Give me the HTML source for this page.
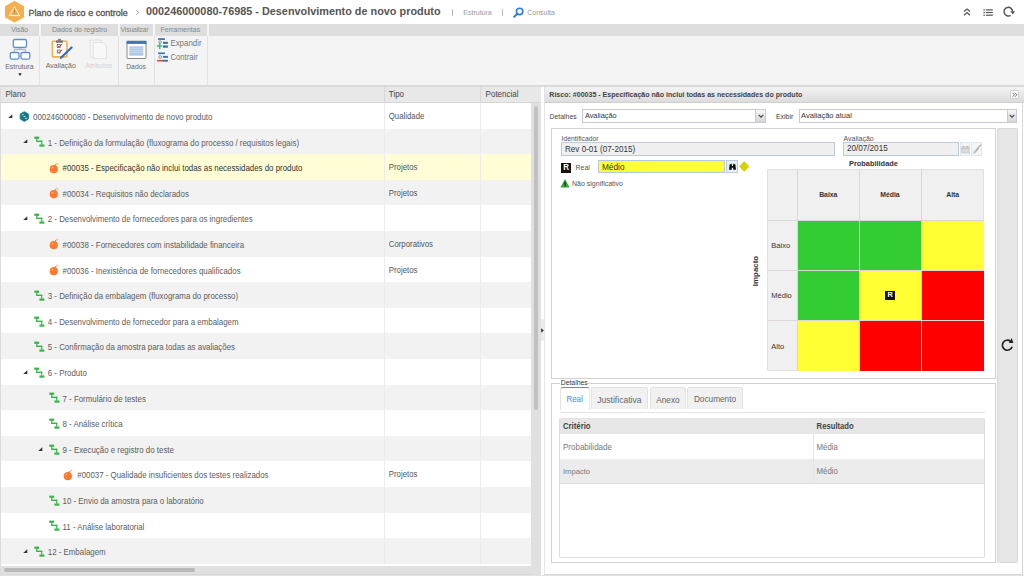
<!DOCTYPE html>
<html><head><meta charset="utf-8">
<style>
*{margin:0;padding:0;box-sizing:border-box}
html,body{width:1024px;height:576px;overflow:hidden;background:#fff;font-family:"Liberation Sans",sans-serif;color:#555}
.a{position:absolute}
.t{position:absolute;white-space:nowrap;line-height:10px;transform:scaleY(1.06)}
svg{position:absolute;overflow:visible}
</style></head><body>
<!-- TITLE BAR -->
<div class="a" style="left:0;top:0;width:1024px;height:23.7px;background:#fff"></div>
<svg style="left:0;top:0" width="30" height="24" viewBox="0 0 30 24">
  <polygon points="14.5,1.6 23.4,6.6 23.4,16.9 14.5,21.9 5.6,16.9 5.6,6.6" fill="#f2b04f" stroke="#f2b04f" stroke-width="1.2" stroke-linejoin="round"/>
  <path d="M14.5 6.8 L19.6 15.6 L9.4 15.6 Z" fill="none" stroke="#fff" stroke-width="0.9" stroke-linejoin="round"/>
  <rect x="14.1" y="9.6" width="0.8" height="3" fill="#a87a30"/>
  <rect x="14.1" y="13.3" width="0.8" height="0.9" fill="#a87a30"/>
</svg>
<div class="t" style="left:28.6px;top:7.7px;font-size:9px;color:#555;-webkit-text-stroke:0.3px #555">Plano de risco e controle</div>
<svg style="left:134.5px;top:8px" width="6" height="9"><path d="M1.4 2.2 L3.7 4.5 L1.4 6.8" fill="none" stroke="#888" stroke-width="0.9"/></svg>
<div class="t" style="left:146px;top:5.1px;font-size:10.86px;line-height:12px;color:#555;font-weight:bold">000246000080-76985 - Desenvolvimento de novo produto</div>
<div class="a" style="left:452.3px;top:9px;width:0.7px;height:7px;background:#bbb"></div>
<div class="t" style="left:463.3px;top:8px;font-size:7px;color:#999">Estrutura</div>
<div class="a" style="left:502.2px;top:9px;width:0.7px;height:7px;background:#bbb"></div>
<svg style="left:513px;top:7px" width="11" height="11" viewBox="0 0 11 11">
  <circle cx="6.6" cy="4.4" r="3.2" fill="none" stroke="#2f7bd1" stroke-width="1.6"/>
  <path d="M4.4 6.6 L1.2 9.8" stroke="#2f7bd1" stroke-width="2" stroke-linecap="round"/>
</svg>
<div class="t" style="left:527.2px;top:8px;font-size:7px;color:#999">Consulta</div>
<!-- right icons -->
<svg style="left:963px;top:7px" width="8" height="10" viewBox="0 0 8 10">
  <path d="M1 4.6 L4 2 L7 4.6 M1 8.2 L4 5.6 L7 8.2" fill="none" stroke="#555" stroke-width="1.3"/>
</svg>
<svg style="left:982.5px;top:8.5px" width="11" height="8" viewBox="0 0 11 8">
  <rect x="0.4" y="0.3" width="1.5" height="1.2" fill="#555"/><rect x="2.8" y="0.3" width="7" height="1.2" fill="#555"/>
  <rect x="0.4" y="2.9" width="1.5" height="1.2" fill="#555"/><rect x="2.8" y="2.9" width="7" height="1.2" fill="#555"/>
  <rect x="0.4" y="5.6" width="1.5" height="1.2" fill="#555"/><rect x="2.8" y="5.6" width="7" height="1.2" fill="#555"/>
</svg>
<svg style="left:1000px;top:4px" width="18" height="16" viewBox="0 0 18 16">
  <path d="M10.6 11.3 A4.3 4.3 0 1 1 12.6 7.6" fill="none" stroke="#555" stroke-width="1.5"/>
  <path d="M10.3 7.3 L15.2 7.3 L12.8 10.5 Z" fill="#555"/>
</svg>

<!-- RIBBON -->
<div class="a" style="left:0;top:23.7px;width:1024px;height:63.1px;background:#f4f4f4"></div>
<div class="a" style="left:0;top:23.8px;width:39.2px;height:12px;background:#dedede"></div>
<div class="a" style="left:41.1px;top:23.8px;width:77px;height:12px;background:#dedede"></div>
<div class="a" style="left:120px;top:23.8px;width:33.2px;height:12px;background:#dedede"></div>
<div class="a" style="left:155.2px;top:23.8px;width:51.8px;height:12px;background:#dedede"></div>
<div class="a" style="left:209px;top:23.8px;width:815px;height:12px;background:#dedede"></div>
<div class="t" style="left:11.2px;top:24.7px;font-size:6.8px;color:#888">Visão</div>
<div class="t" style="left:52px;top:24.7px;font-size:7px;color:#888">Dados do registro</div>
<div class="t" style="left:120.6px;top:24.7px;font-size:6.9px;color:#888;letter-spacing:-0.2px">Visualizar</div>
<div class="t" style="left:160.5px;top:24.7px;font-size:7px;color:#888">Ferramentas</div>
<div class="a" style="left:39.2px;top:35.8px;width:0.8px;height:49px;background:#e2e2e2"></div>
<div class="a" style="left:118.3px;top:35.8px;width:0.8px;height:49px;background:#e2e2e2"></div>
<div class="a" style="left:153.5px;top:35.8px;width:0.8px;height:49px;background:#e2e2e2"></div>
<div class="a" style="left:207.2px;top:35.8px;width:0.8px;height:49px;background:#e2e2e2"></div>
<div class="a" style="left:0;top:84.7px;width:1024px;height:2.1px;background:#dadada"></div>

<!-- Estrutura icon -->
<svg style="left:9px;top:38px" width="22" height="23" viewBox="0 0 22 23">
  <rect x="4.3" y="1.5" width="13.2" height="8" rx="1.5" fill="#fff" stroke="#5b8ed0" stroke-width="1.3"/>
  <path d="M10.9 9.5 V11.6 M5.2 14 V11.6 H16.4 V14" fill="none" stroke="#999" stroke-width="0.8"/>
  <rect x="1.3" y="14.5" width="8.6" height="6.6" rx="1.5" fill="#fff" stroke="#5b8ed0" stroke-width="1.3"/>
  <rect x="12" y="14.5" width="8.8" height="6.6" rx="1.5" fill="#fff" stroke="#5b8ed0" stroke-width="1.3"/>
</svg>
<div class="t" style="left:5.2px;top:61.5px;font-size:7px;color:#6a6a6a">Estrutura</div>
<svg style="left:17.5px;top:72.5px" width="4" height="3"><path d="M0.3 0.3 L3.7 0.3 L2 2.9 Z" fill="#222"/></svg>

<!-- Avaliação icon -->
<svg style="left:50px;top:37px" width="25" height="24" viewBox="0 0 25 24">
  <rect x="2.4" y="4.3" width="14.5" height="15.6" rx="0.8" fill="#fff" stroke="#efb04e" stroke-width="1.6"/>
  <rect x="6" y="3.4" width="7" height="2.4" fill="#777"/>
  <rect x="8.2" y="1.8" width="2.6" height="2" fill="#777"/>
  <rect x="7.2" y="7.4" width="3" height="3" fill="none" stroke="#555" stroke-width="0.7"/>
  <path d="M7.8 8.8 L8.9 9.9 L12.3 7.1" fill="none" stroke="#e0322b" stroke-width="1"/>
  <rect x="7.2" y="13" width="3" height="3" fill="none" stroke="#555" stroke-width="0.7"/>
  <path d="M7.8 14.4 L8.9 15.5 L12.3 12.7" fill="none" stroke="#e0322b" stroke-width="1"/>
  <path d="M21.6 10.4 L11.2 20.6" stroke="#2a6fc8" stroke-width="2.1" stroke-linecap="round"/>
  <path d="M11.6 19 L9.4 22.3 L12.9 20.4 Z" fill="#2a6fc8"/>
</svg>
<div class="t" style="left:45.8px;top:61.3px;font-size:6.95px;color:#6a6a6a">Avaliação</div>
<!-- Atributos icon disabled -->
<svg style="left:89px;top:39px" width="19" height="21" viewBox="0 0 19 21">
  <path d="M1.2 1 H12 L12 18.5 H1.2 Z" fill="#f6f6f6" stroke="#dcdcdc" stroke-width="0.8"/>
  <path d="M4.2 3.5 H14 L17.4 6.9 V19.6 H4.2 Z" fill="#f8f8f8" stroke="#dcdcdc" stroke-width="0.8"/>
</svg>
<div class="t" style="left:85.4px;top:61.3px;font-size:6.75px;color:#d2d2d2">Atributos</div>

<!-- Dados icon -->
<svg style="left:126px;top:40px" width="21" height="20" viewBox="0 0 21 20">
  <rect x="1" y="1.3" width="19" height="17.2" rx="0.8" fill="#fff" stroke="#7b7b7b" stroke-width="0.9"/>
  <rect x="0.6" y="0.9" width="19.8" height="3" fill="#3a75c2"/>
  <rect x="3.3" y="6.3" width="14" height="9.3" fill="#a9c5e6"/>
  <path d="M3.3 8.2 H17.3 M3.3 10.4 H17.3 M3.3 12.7 H17.3" stroke="#fff" stroke-width="0.6" opacity="0.7"/>
</svg>
<div class="t" style="left:126.2px;top:61.9px;font-size:6.8px;color:#6a6a6a">Dados</div>

<!-- Expandir / Contrair -->
<svg style="left:154px;top:36px" width="16" height="28" viewBox="154 36 16 28">
  <rect x="158.1" y="38.2" width="6.8" height="1.7" fill="#2e6fba"/>
  <circle cx="160" cy="42" r="1.3" fill="none" stroke="#777" stroke-width="0.7"/>
  <rect x="163" y="41.8" width="4.9" height="2" fill="#2e6fba"/>
  <rect x="163" y="45.5" width="4.9" height="2.2" fill="#2e6fba"/>
  <path d="M156.9 46 H162.5 M159.7 43.1 V48.9" stroke="#3fbf80" stroke-width="1.6"/>
  <rect x="158.1" y="52.5" width="6.8" height="1.6" fill="#2e6fba"/>
  <circle cx="160.2" cy="57" r="1.4" fill="none" stroke="#777" stroke-width="0.7"/>
  <rect x="163" y="55.9" width="4.9" height="1.9" fill="#2e6fba"/>
  <rect x="163" y="59.8" width="4.9" height="1.9" fill="#2e6fba"/>
  <rect x="157.2" y="59.9" width="5.8" height="1.6" fill="#d9472b"/>
</svg>
<div class="t" style="left:170.4px;top:39.1px;font-size:7.9px;color:#777">Expandir</div>
<div class="t" style="left:170.4px;top:53.4px;font-size:7.7px;color:#777">Contrair</div>

<div class="a" style="left:0;top:86.8px;width:540.6px;height:489.2px;background:#fff"></div>
<div class="a" style="left:0;top:86.8px;width:1.4px;height:489.2px;background:#dcdcdc"></div>
<div class="a" style="left:1.4px;top:86.8px;width:539.2px;height:16.2px;background:#e8e8e8;border-bottom:0.8px solid #d6d6d6"></div>
<div class="a" style="left:384px;top:86.8px;width:0.8px;height:15.7px;background:#d8d8d8"></div>
<div class="a" style="left:480px;top:86.8px;width:0.8px;height:15.7px;background:#d8d8d8"></div>
<div class="t" style="left:5.5px;top:90.2px;font-size:7.9px;color:#444">Plano</div>
<div class="t" style="left:388.8px;top:90.2px;font-size:8px;color:#444">Tipo</div>
<div class="t" style="left:485.6px;top:90.2px;font-size:8px;color:#444">Potencial</div>
<div class="a" style="left:1.4px;top:103.00px;width:529.6px;height:25.60px;background:#fff"></div>
<div class="a" style="left:384px;top:103.00px;width:0.8px;height:25.60px;background:#ececec"></div>
<div class="a" style="left:480px;top:103.00px;width:0.8px;height:25.60px;background:#ececec"></div>
<svg style="left:8.20px;top:113.80px" width="5" height="5" viewBox="0 0 5 5"><path d="M4.3 0.2 L4.3 4.1 L0.2 4.1 Z" fill="#333"/></svg>
<svg style="left:19.20px;top:111.00px" width="11" height="12" viewBox="0 0 11 12"><polygon points="5.3,0.7 9.4,3.1 9.4,8 5.3,10.4 1.2,8 1.2,3.1" fill="#15798a" stroke="#15798a" stroke-width="0.9" stroke-linejoin="round"/><path d="M2.9 3.7 H4.6 M4.6 5.5 H6.3 M6.2 7.3 H7.9" stroke="#e8f4f6" stroke-width="0.9"/></svg>
<div class="t" style="left:33.00px;top:113.00px;font-size:7.9px;color:#5c5c5c;transform:scaleY(1.08)">000246000080 - Desenvolvimento de novo produto</div>
<div class="t" style="left:388.8px;top:111.90px;font-size:7.8px;color:#555;transform:scaleY(1.1)">Qualidade</div>
<div class="a" style="left:1.4px;top:128.60px;width:529.6px;height:25.60px;background:#f2f2f2"></div>
<div class="a" style="left:384px;top:128.60px;width:0.8px;height:25.60px;background:#ececec"></div>
<div class="a" style="left:480px;top:128.60px;width:0.8px;height:25.60px;background:#ececec"></div>
<svg style="left:22.95px;top:139.40px" width="5" height="5" viewBox="0 0 5 5"><path d="M4.3 0.2 L4.3 4.1 L0.2 4.1 Z" fill="#333"/></svg>
<svg style="left:33.95px;top:136.40px" width="11" height="11" viewBox="0 0 11 11"><rect x="0.3" y="0.6" width="4.85" height="2.3" fill="#3ab54a"/><rect x="2.2" y="2.5" width="1.2" height="3.5" fill="#3ab54a"/><rect x="2.2" y="4.6" width="6.1" height="1.4" fill="#3ab54a"/><rect x="7.1" y="4.8" width="1.2" height="3.9" fill="#3ab54a"/><rect x="5.4" y="8.45" width="5" height="2.25" fill="#3ab54a"/></svg>
<div class="t" style="left:47.75px;top:138.60px;font-size:7.9px;color:#5c5c5c;transform:scaleY(1.08)">1 - Definição da formulação (fluxograma do processo / requisitos legais)</div>
<div class="a" style="left:1.4px;top:154.20px;width:529.6px;height:25.60px;background:#fefdd5"></div>
<div class="a" style="left:384px;top:154.20px;width:0.8px;height:25.60px;background:#ececec"></div>
<div class="a" style="left:480px;top:154.20px;width:0.8px;height:25.60px;background:#ececec"></div>
<svg style="left:48.70px;top:161.50px" width="11" height="12" viewBox="0 0 11 12"><circle cx="4.8" cy="7.2" r="4.1" fill="#ff7a2e"/><path d="M6 3.6 L7 2.2" stroke="#ff7a2e" stroke-width="1.2"/><path d="M7.8 0.6 L8.6 2.6 M7 1.7 L9.4 1.5" stroke="#ffb070" stroke-width="0.7"/><path d="M2.6 6.6 Q3 5.2 4.4 4.9" fill="none" stroke="#ffd9bf" stroke-width="0.8"/></svg>
<div class="t" style="left:62.50px;top:164.20px;font-size:7.9px;color:#333;transform:scaleY(1.08)">#00035 - Especificação não inclui todas as necessidades do produto</div>
<div class="t" style="left:388.8px;top:163.10px;font-size:7.8px;color:#555;transform:scaleY(1.1)">Projetos</div>
<div class="a" style="left:1.4px;top:179.80px;width:529.6px;height:25.60px;background:#f2f2f2"></div>
<div class="a" style="left:384px;top:179.80px;width:0.8px;height:25.60px;background:#ececec"></div>
<div class="a" style="left:480px;top:179.80px;width:0.8px;height:25.60px;background:#ececec"></div>
<svg style="left:48.70px;top:187.10px" width="11" height="12" viewBox="0 0 11 12"><circle cx="4.8" cy="7.2" r="4.1" fill="#ff7a2e"/><path d="M6 3.6 L7 2.2" stroke="#ff7a2e" stroke-width="1.2"/><path d="M7.8 0.6 L8.6 2.6 M7 1.7 L9.4 1.5" stroke="#ffb070" stroke-width="0.7"/><path d="M2.6 6.6 Q3 5.2 4.4 4.9" fill="none" stroke="#ffd9bf" stroke-width="0.8"/></svg>
<div class="t" style="left:62.50px;top:189.80px;font-size:7.9px;color:#5c5c5c;transform:scaleY(1.08)">#00034 - Requisitos não declarados</div>
<div class="t" style="left:388.8px;top:188.70px;font-size:7.8px;color:#555;transform:scaleY(1.1)">Projetos</div>
<div class="a" style="left:1.4px;top:205.40px;width:529.6px;height:25.60px;background:#fff"></div>
<div class="a" style="left:384px;top:205.40px;width:0.8px;height:25.60px;background:#ececec"></div>
<div class="a" style="left:480px;top:205.40px;width:0.8px;height:25.60px;background:#ececec"></div>
<svg style="left:22.95px;top:216.20px" width="5" height="5" viewBox="0 0 5 5"><path d="M4.3 0.2 L4.3 4.1 L0.2 4.1 Z" fill="#333"/></svg>
<svg style="left:33.95px;top:213.20px" width="11" height="11" viewBox="0 0 11 11"><rect x="0.3" y="0.6" width="4.85" height="2.3" fill="#3ab54a"/><rect x="2.2" y="2.5" width="1.2" height="3.5" fill="#3ab54a"/><rect x="2.2" y="4.6" width="6.1" height="1.4" fill="#3ab54a"/><rect x="7.1" y="4.8" width="1.2" height="3.9" fill="#3ab54a"/><rect x="5.4" y="8.45" width="5" height="2.25" fill="#3ab54a"/></svg>
<div class="t" style="left:47.75px;top:215.40px;font-size:7.9px;color:#5c5c5c;transform:scaleY(1.08)">2 - Desenvolvimento de fornecedores para os ingredientes</div>
<div class="a" style="left:1.4px;top:231.00px;width:529.6px;height:25.60px;background:#f2f2f2"></div>
<div class="a" style="left:384px;top:231.00px;width:0.8px;height:25.60px;background:#ececec"></div>
<div class="a" style="left:480px;top:231.00px;width:0.8px;height:25.60px;background:#ececec"></div>
<svg style="left:48.70px;top:238.30px" width="11" height="12" viewBox="0 0 11 12"><circle cx="4.8" cy="7.2" r="4.1" fill="#ff7a2e"/><path d="M6 3.6 L7 2.2" stroke="#ff7a2e" stroke-width="1.2"/><path d="M7.8 0.6 L8.6 2.6 M7 1.7 L9.4 1.5" stroke="#ffb070" stroke-width="0.7"/><path d="M2.6 6.6 Q3 5.2 4.4 4.9" fill="none" stroke="#ffd9bf" stroke-width="0.8"/></svg>
<div class="t" style="left:62.50px;top:241.00px;font-size:7.9px;color:#5c5c5c;transform:scaleY(1.08)">#00038 - Fornecedores com instabilidade financeira</div>
<div class="t" style="left:388.8px;top:239.90px;font-size:7.8px;color:#555;transform:scaleY(1.1)">Corporativos</div>
<div class="a" style="left:1.4px;top:256.60px;width:529.6px;height:25.60px;background:#fff"></div>
<div class="a" style="left:384px;top:256.60px;width:0.8px;height:25.60px;background:#ececec"></div>
<div class="a" style="left:480px;top:256.60px;width:0.8px;height:25.60px;background:#ececec"></div>
<svg style="left:48.70px;top:263.90px" width="11" height="12" viewBox="0 0 11 12"><circle cx="4.8" cy="7.2" r="4.1" fill="#ff7a2e"/><path d="M6 3.6 L7 2.2" stroke="#ff7a2e" stroke-width="1.2"/><path d="M7.8 0.6 L8.6 2.6 M7 1.7 L9.4 1.5" stroke="#ffb070" stroke-width="0.7"/><path d="M2.6 6.6 Q3 5.2 4.4 4.9" fill="none" stroke="#ffd9bf" stroke-width="0.8"/></svg>
<div class="t" style="left:62.50px;top:266.60px;font-size:7.9px;color:#5c5c5c;transform:scaleY(1.08)">#00036 - Inexistência de fornecedores qualificados</div>
<div class="t" style="left:388.8px;top:265.50px;font-size:7.8px;color:#555;transform:scaleY(1.1)">Projetos</div>
<div class="a" style="left:1.4px;top:282.20px;width:529.6px;height:25.60px;background:#f2f2f2"></div>
<div class="a" style="left:384px;top:282.20px;width:0.8px;height:25.60px;background:#ececec"></div>
<div class="a" style="left:480px;top:282.20px;width:0.8px;height:25.60px;background:#ececec"></div>
<svg style="left:33.95px;top:290.00px" width="11" height="11" viewBox="0 0 11 11"><rect x="0.3" y="0.6" width="4.85" height="2.3" fill="#3ab54a"/><rect x="2.2" y="2.5" width="1.2" height="3.5" fill="#3ab54a"/><rect x="2.2" y="4.6" width="6.1" height="1.4" fill="#3ab54a"/><rect x="7.1" y="4.8" width="1.2" height="3.9" fill="#3ab54a"/><rect x="5.4" y="8.45" width="5" height="2.25" fill="#3ab54a"/></svg>
<div class="t" style="left:47.75px;top:292.20px;font-size:7.9px;color:#5c5c5c;transform:scaleY(1.08)">3 - Definição da embalagem (fluxograma do processo)</div>
<div class="a" style="left:1.4px;top:307.80px;width:529.6px;height:25.60px;background:#fff"></div>
<div class="a" style="left:384px;top:307.80px;width:0.8px;height:25.60px;background:#ececec"></div>
<div class="a" style="left:480px;top:307.80px;width:0.8px;height:25.60px;background:#ececec"></div>
<svg style="left:33.95px;top:315.60px" width="11" height="11" viewBox="0 0 11 11"><rect x="0.3" y="0.6" width="4.85" height="2.3" fill="#3ab54a"/><rect x="2.2" y="2.5" width="1.2" height="3.5" fill="#3ab54a"/><rect x="2.2" y="4.6" width="6.1" height="1.4" fill="#3ab54a"/><rect x="7.1" y="4.8" width="1.2" height="3.9" fill="#3ab54a"/><rect x="5.4" y="8.45" width="5" height="2.25" fill="#3ab54a"/></svg>
<div class="t" style="left:47.75px;top:317.80px;font-size:7.9px;color:#5c5c5c;transform:scaleY(1.08)">4 - Desenvolvimento de fornecedor para a embalagem</div>
<div class="a" style="left:1.4px;top:333.40px;width:529.6px;height:25.60px;background:#f2f2f2"></div>
<div class="a" style="left:384px;top:333.40px;width:0.8px;height:25.60px;background:#ececec"></div>
<div class="a" style="left:480px;top:333.40px;width:0.8px;height:25.60px;background:#ececec"></div>
<svg style="left:33.95px;top:341.20px" width="11" height="11" viewBox="0 0 11 11"><rect x="0.3" y="0.6" width="4.85" height="2.3" fill="#3ab54a"/><rect x="2.2" y="2.5" width="1.2" height="3.5" fill="#3ab54a"/><rect x="2.2" y="4.6" width="6.1" height="1.4" fill="#3ab54a"/><rect x="7.1" y="4.8" width="1.2" height="3.9" fill="#3ab54a"/><rect x="5.4" y="8.45" width="5" height="2.25" fill="#3ab54a"/></svg>
<div class="t" style="left:47.75px;top:343.40px;font-size:7.9px;color:#5c5c5c;transform:scaleY(1.08)">5 - Confirmação da amostra para todas as avaliações</div>
<div class="a" style="left:1.4px;top:359.00px;width:529.6px;height:25.60px;background:#fff"></div>
<div class="a" style="left:384px;top:359.00px;width:0.8px;height:25.60px;background:#ececec"></div>
<div class="a" style="left:480px;top:359.00px;width:0.8px;height:25.60px;background:#ececec"></div>
<svg style="left:22.95px;top:369.80px" width="5" height="5" viewBox="0 0 5 5"><path d="M4.3 0.2 L4.3 4.1 L0.2 4.1 Z" fill="#333"/></svg>
<svg style="left:33.95px;top:366.80px" width="11" height="11" viewBox="0 0 11 11"><rect x="0.3" y="0.6" width="4.85" height="2.3" fill="#3ab54a"/><rect x="2.2" y="2.5" width="1.2" height="3.5" fill="#3ab54a"/><rect x="2.2" y="4.6" width="6.1" height="1.4" fill="#3ab54a"/><rect x="7.1" y="4.8" width="1.2" height="3.9" fill="#3ab54a"/><rect x="5.4" y="8.45" width="5" height="2.25" fill="#3ab54a"/></svg>
<div class="t" style="left:47.75px;top:369.00px;font-size:7.9px;color:#5c5c5c;transform:scaleY(1.08)">6 - Produto</div>
<div class="a" style="left:1.4px;top:384.60px;width:529.6px;height:25.60px;background:#f2f2f2"></div>
<div class="a" style="left:384px;top:384.60px;width:0.8px;height:25.60px;background:#ececec"></div>
<div class="a" style="left:480px;top:384.60px;width:0.8px;height:25.60px;background:#ececec"></div>
<svg style="left:48.70px;top:392.40px" width="11" height="11" viewBox="0 0 11 11"><rect x="0.3" y="0.6" width="4.85" height="2.3" fill="#3ab54a"/><rect x="2.2" y="2.5" width="1.2" height="3.5" fill="#3ab54a"/><rect x="2.2" y="4.6" width="6.1" height="1.4" fill="#3ab54a"/><rect x="7.1" y="4.8" width="1.2" height="3.9" fill="#3ab54a"/><rect x="5.4" y="8.45" width="5" height="2.25" fill="#3ab54a"/></svg>
<div class="t" style="left:62.50px;top:394.60px;font-size:7.9px;color:#5c5c5c;transform:scaleY(1.08)">7 - Formulário de testes</div>
<div class="a" style="left:1.4px;top:410.20px;width:529.6px;height:25.60px;background:#fff"></div>
<div class="a" style="left:384px;top:410.20px;width:0.8px;height:25.60px;background:#ececec"></div>
<div class="a" style="left:480px;top:410.20px;width:0.8px;height:25.60px;background:#ececec"></div>
<svg style="left:48.70px;top:418.00px" width="11" height="11" viewBox="0 0 11 11"><rect x="0.3" y="0.6" width="4.85" height="2.3" fill="#3ab54a"/><rect x="2.2" y="2.5" width="1.2" height="3.5" fill="#3ab54a"/><rect x="2.2" y="4.6" width="6.1" height="1.4" fill="#3ab54a"/><rect x="7.1" y="4.8" width="1.2" height="3.9" fill="#3ab54a"/><rect x="5.4" y="8.45" width="5" height="2.25" fill="#3ab54a"/></svg>
<div class="t" style="left:62.50px;top:420.20px;font-size:7.9px;color:#5c5c5c;transform:scaleY(1.08)">8 - Análise crítica</div>
<div class="a" style="left:1.4px;top:435.80px;width:529.6px;height:25.60px;background:#f2f2f2"></div>
<div class="a" style="left:384px;top:435.80px;width:0.8px;height:25.60px;background:#ececec"></div>
<div class="a" style="left:480px;top:435.80px;width:0.8px;height:25.60px;background:#ececec"></div>
<svg style="left:37.70px;top:446.60px" width="5" height="5" viewBox="0 0 5 5"><path d="M4.3 0.2 L4.3 4.1 L0.2 4.1 Z" fill="#333"/></svg>
<svg style="left:48.70px;top:443.60px" width="11" height="11" viewBox="0 0 11 11"><rect x="0.3" y="0.6" width="4.85" height="2.3" fill="#3ab54a"/><rect x="2.2" y="2.5" width="1.2" height="3.5" fill="#3ab54a"/><rect x="2.2" y="4.6" width="6.1" height="1.4" fill="#3ab54a"/><rect x="7.1" y="4.8" width="1.2" height="3.9" fill="#3ab54a"/><rect x="5.4" y="8.45" width="5" height="2.25" fill="#3ab54a"/></svg>
<div class="t" style="left:62.50px;top:445.80px;font-size:7.9px;color:#5c5c5c;transform:scaleY(1.08)">9 - Execução e registro do teste</div>
<div class="a" style="left:1.4px;top:461.40px;width:529.6px;height:25.60px;background:#fff"></div>
<div class="a" style="left:384px;top:461.40px;width:0.8px;height:25.60px;background:#ececec"></div>
<div class="a" style="left:480px;top:461.40px;width:0.8px;height:25.60px;background:#ececec"></div>
<svg style="left:63.45px;top:468.70px" width="11" height="12" viewBox="0 0 11 12"><circle cx="4.8" cy="7.2" r="4.1" fill="#ff7a2e"/><path d="M6 3.6 L7 2.2" stroke="#ff7a2e" stroke-width="1.2"/><path d="M7.8 0.6 L8.6 2.6 M7 1.7 L9.4 1.5" stroke="#ffb070" stroke-width="0.7"/><path d="M2.6 6.6 Q3 5.2 4.4 4.9" fill="none" stroke="#ffd9bf" stroke-width="0.8"/></svg>
<div class="t" style="left:77.25px;top:471.40px;font-size:7.9px;color:#5c5c5c;transform:scaleY(1.08)">#00037 - Qualidade insuficientes dos testes realizados</div>
<div class="t" style="left:388.8px;top:470.30px;font-size:7.8px;color:#555;transform:scaleY(1.1)">Projetos</div>
<div class="a" style="left:1.4px;top:487.00px;width:529.6px;height:25.60px;background:#f2f2f2"></div>
<div class="a" style="left:384px;top:487.00px;width:0.8px;height:25.60px;background:#ececec"></div>
<div class="a" style="left:480px;top:487.00px;width:0.8px;height:25.60px;background:#ececec"></div>
<svg style="left:48.70px;top:494.80px" width="11" height="11" viewBox="0 0 11 11"><rect x="0.3" y="0.6" width="4.85" height="2.3" fill="#3ab54a"/><rect x="2.2" y="2.5" width="1.2" height="3.5" fill="#3ab54a"/><rect x="2.2" y="4.6" width="6.1" height="1.4" fill="#3ab54a"/><rect x="7.1" y="4.8" width="1.2" height="3.9" fill="#3ab54a"/><rect x="5.4" y="8.45" width="5" height="2.25" fill="#3ab54a"/></svg>
<div class="t" style="left:62.50px;top:497.00px;font-size:7.9px;color:#5c5c5c;transform:scaleY(1.08)">10 - Envio da amostra para o laboratório</div>
<div class="a" style="left:1.4px;top:512.60px;width:529.6px;height:25.60px;background:#fff"></div>
<div class="a" style="left:384px;top:512.60px;width:0.8px;height:25.60px;background:#ececec"></div>
<div class="a" style="left:480px;top:512.60px;width:0.8px;height:25.60px;background:#ececec"></div>
<svg style="left:48.70px;top:520.40px" width="11" height="11" viewBox="0 0 11 11"><rect x="0.3" y="0.6" width="4.85" height="2.3" fill="#3ab54a"/><rect x="2.2" y="2.5" width="1.2" height="3.5" fill="#3ab54a"/><rect x="2.2" y="4.6" width="6.1" height="1.4" fill="#3ab54a"/><rect x="7.1" y="4.8" width="1.2" height="3.9" fill="#3ab54a"/><rect x="5.4" y="8.45" width="5" height="2.25" fill="#3ab54a"/></svg>
<div class="t" style="left:62.50px;top:522.60px;font-size:7.9px;color:#5c5c5c;transform:scaleY(1.08)">11 - Análise laboratorial</div>
<div class="a" style="left:1.4px;top:538.20px;width:529.6px;height:26.10px;background:#f2f2f2"></div>
<div class="a" style="left:384px;top:538.20px;width:0.8px;height:26.10px;background:#ececec"></div>
<div class="a" style="left:480px;top:538.20px;width:0.8px;height:26.10px;background:#ececec"></div>
<svg style="left:22.95px;top:549.00px" width="5" height="5" viewBox="0 0 5 5"><path d="M4.3 0.2 L4.3 4.1 L0.2 4.1 Z" fill="#333"/></svg>
<svg style="left:33.95px;top:546.00px" width="11" height="11" viewBox="0 0 11 11"><rect x="0.3" y="0.6" width="4.85" height="2.3" fill="#3ab54a"/><rect x="2.2" y="2.5" width="1.2" height="3.5" fill="#3ab54a"/><rect x="2.2" y="4.6" width="6.1" height="1.4" fill="#3ab54a"/><rect x="7.1" y="4.8" width="1.2" height="3.9" fill="#3ab54a"/><rect x="5.4" y="8.45" width="5" height="2.25" fill="#3ab54a"/></svg>
<div class="t" style="left:47.75px;top:548.20px;font-size:7.9px;color:#5c5c5c;transform:scaleY(1.08)">12 - Embalagem</div>
<div class="a" style="left:1.4px;top:564.3px;width:529.6px;height:1.9px;background:#fff"></div>
<div class="a" style="left:1.4px;top:566.2px;width:539.2px;height:9.8px;background:#e0e0e0"></div>
<div class="a" style="left:4px;top:568.2px;width:190.5px;height:3.7px;background:#b9b9b9;border-radius:2px"></div>
<div class="a" style="left:0;top:574.2px;width:541px;height:1.8px;background:#d8d8d8"></div>
<div class="a" style="left:531px;top:102.5px;width:9.6px;height:473.5px;background:#e0e0e0"></div>
<div class="a" style="left:533.7px;top:105.5px;width:3.9px;height:304.2px;background:#c0c0c0;border-radius:2px"></div>
<div class="a" style="left:540.6px;top:86.8px;width:3.6px;height:489.2px;background:#fff"></div>
<div class="a" style="left:540.9px;top:319.3px;width:3.6px;height:21.8px;background:#ececec;border-radius:0 2px 2px 0"></div>
<svg style="left:541.3px;top:328px" width="3" height="5"><path d="M0.2 0.3 L2.8 2.5 L0.2 4.7 Z" fill="#333"/></svg>
<div class="a" style="left:544px;top:86.8px;width:478.9px;height:487.8px;background:#fff;border-left:1px solid #e6e6e6;border-right:0.9px solid #d6d6d6;border-bottom:0.9px solid #d6d6d6"></div>
<div class="a" style="left:0;top:574.5px;width:1024px;height:1.5px;background:#e2e2e2"></div>
<div class="a" style="left:544px;top:86.8px;width:479.5px;height:16px;background:linear-gradient(#f4f4f4,#dcdcdc);border-left:1px solid #e2e2e2;border-bottom:0.6px solid #cfcfcf"></div>
<div class="t" style="left:549.3px;top:90px;font-size:7.05px;font-weight:bold;color:#444">Risco: #00035 - Especificação não inclui todas as necessidades do produto</div>
<div class="a" style="left:1010.4px;top:89.8px;width:8.9px;height:8.8px;background:#fafafa;border:0.7px solid #d0d0d0;border-radius:1px"></div>
<svg style="left:1012px;top:91.5px" width="6" height="6" viewBox="0 0 6 6"><path d="M0.6 0.8 L2.4 2.8 L0.6 4.8 M3 0.8 L4.8 2.8 L3 4.8" fill="none" stroke="#555" stroke-width="0.8"/></svg>
<div class="t" style="left:549.6px;top:111.7px;font-size:6.85px;color:#444">Detalhes</div>
<div class="a" style="left:582.2px;top:109px;width:183.70px;height:13.7px;background:#fff;border:0.8px solid #c3c8dc"></div>
<div class="a" style="left:755.10px;top:109px;width:10.8px;height:13.7px;background:linear-gradient(#f6f6f6,#d6d6d6);border:0.8px solid #c8cbd6;border-left-color:#c3c8dc"></div>
<svg style="left:757.90px;top:113.5px" width="6" height="5" viewBox="0 0 6 5"><path d="M0.6 0.9 L3 3.2 L5.4 0.9" fill="none" stroke="#444" stroke-width="1.1"/></svg>
<div class="t" style="left:584.9px;top:111.4px;font-size:7.35px;color:#333">Avaliação</div>
<div class="t" style="left:776px;top:111.7px;font-size:6.9px;color:#444">Exibir</div>
<div class="a" style="left:798.6px;top:109px;width:218.70px;height:13.7px;background:#fff;border:0.8px solid #c3c8dc"></div>
<div class="a" style="left:1006.50px;top:109px;width:10.8px;height:13.7px;background:linear-gradient(#f6f6f6,#d6d6d6);border:0.8px solid #c8cbd6;border-left-color:#c3c8dc"></div>
<svg style="left:1009.30px;top:113.5px" width="6" height="5" viewBox="0 0 6 5"><path d="M0.6 0.9 L3 3.2 L5.4 0.9" fill="none" stroke="#444" stroke-width="1.1"/></svg>
<div class="t" style="left:801.1px;top:111.4px;font-size:7.5px;color:#333">Avaliação atual</div>
<div class="a" style="left:551.3px;top:128.3px;width:444.6px;height:250.4px;border:0.9px solid #d2d2d2"></div>
<div class="a" style="left:997.2px;top:128.2px;width:21px;height:434.8px;background:#e6e6e6;border:0.8px solid #d8d8d8;border-radius:1.5px"></div>
<svg style="left:998px;top:336px" width="18" height="18" viewBox="0 0 18 18"><path d="M14.1 10.8 A5 5 0 1 1 12.6 5.4" fill="none" stroke="#222" stroke-width="1.7"/><path d="M10.9 6.9 L15.4 6.9 L13.7 2.1 Z" fill="#222"/></svg>
<div class="t" style="left:561.5px;top:133.9px;font-size:6.8px;color:#555">Identificador</div>
<div class="a" style="left:561px;top:142.2px;width:273.8px;height:13.5px;background:#efefef;border:0.8px solid #bccbdc"></div>
<div class="t" style="left:565px;top:144.5px;font-size:8.1px;color:#333">Rev 0-01 (07-2015)</div>
<div class="t" style="left:843.5px;top:133.9px;font-size:7px;color:#555">Avaliação</div>
<div class="a" style="left:843.2px;top:142.3px;width:115.4px;height:13.3px;background:#efefef;border:0.8px solid #bccbdc"></div>
<div class="t" style="left:847px;top:144.4px;font-size:8.15px;color:#333">20/07/2015</div>
<div class="a" style="left:959.6px;top:142.4px;width:10.1px;height:13.2px;background:#f4f6f8;border:0.6px solid #e0e6ee"></div>
<svg style="left:960.6px;top:144.6px" width="9" height="9" viewBox="0 0 9 9"><rect x="0.8" y="1.8" width="7.2" height="6.2" fill="#ddd" stroke="#bbb" stroke-width="0.6"/><path d="M0.8 3.6 H8" stroke="#bbb" stroke-width="0.8"/><path d="M2.4 0.8 V2.4 M6.4 0.8 V2.4" stroke="#aaa" stroke-width="0.8"/></svg>
<div class="a" style="left:971px;top:142.4px;width:10.8px;height:13.2px;background:#f4f6f8;border:0.6px solid #e0e6ee"></div>
<svg style="left:972px;top:143.6px" width="10" height="11" viewBox="0 0 10 11"><path d="M8.6 1.2 L5.4 4.6" stroke="#aaa" stroke-width="1.3" stroke-linecap="round"/><path d="M5.6 3.6 L7 5 L3.6 8.8 Q2.6 9.8 1.6 9.6 L1.2 9.2 Q1 8.2 2 7.2 Z" fill="#b5b5b5"/><path d="M2.2 9.4 L4.4 7.2 M1.6 8.4 L3.6 6.4" stroke="#e8e8e8" stroke-width="0.5"/></svg>
<div class="a" style="left:561px;top:163.1px;width:10.3px;height:10.1px;background:#111"></div>
<div class="t" style="left:563.3px;top:163.1px;font-size:8px;font-weight:bold;color:#fff;line-height:10px">R</div>
<div class="t" style="left:575.6px;top:162.6px;font-size:6.9px;color:#555">Real</div>
<div class="a" style="left:598.4px;top:160.2px;width:126.7px;height:12.9px;background:#ffff33;border:0.8px solid #b4c8de"></div>
<div class="t" style="left:602px;top:163px;font-size:8.25px;color:#333">Médio</div>
<div class="a" style="left:726.4px;top:160.2px;width:11.8px;height:12.9px;background:#e8eef4;border:0.8px solid #bccbdc"></div>
<svg style="left:727.5px;top:162.2px" width="9" height="9" viewBox="0 0 9 9"><path d="M1 7.8 L1.6 2.6 L3.6 1.6 L4 4 L5 4 L5.4 1.6 L7.4 2.6 L8 7.8 L5.2 7.8 L5.2 5.8 L3.8 5.8 L3.8 7.8 Z" fill="#111"/></svg>
<svg style="left:738.6px;top:160.8px" width="11" height="11" viewBox="0 0 11 11"><polygon points="5.2,0.2 10.4,5.5 5.2,10.8 0,5.5" fill="#d3d300"/></svg>
<svg style="left:559.6px;top:179.4px" width="10" height="9" viewBox="0 0 10 9"><path d="M4.7 0.4 Q5 0 5.3 0.4 L9.4 7.9 Q9.6 8.6 8.9 8.6 L1.1 8.6 Q0.4 8.6 0.6 7.9 Z" fill="#3aa83a"/><rect x="4.45" y="2.7" width="1.1" height="3.4" fill="#111"/><rect x="4.45" y="6.7" width="1.1" height="1.1" fill="#111"/></svg>
<div class="t" style="left:572px;top:179px;font-size:7px;color:#555">Não significativo</div>
<div class="t" style="left:849px;top:158.6px;font-size:7.4px;font-weight:bold;color:#333">Probabilidade</div>
<div class="a" style="left:767.4px;top:169.4px;width:216.5px;height:201.8px;background:#f0f0f0"></div>
<div class="a" style="left:797.5px;top:220.0px;width:61.70px;height:50.50px;background:#33cc33"></div>
<div class="a" style="left:859.2px;top:220.0px;width:62.30px;height:50.50px;background:#33cc33"></div>
<div class="a" style="left:921.5px;top:220.0px;width:62.70px;height:50.50px;background:#ffff33"></div>
<div class="a" style="left:797.5px;top:270.5px;width:61.70px;height:50.10px;background:#33cc33"></div>
<div class="a" style="left:859.2px;top:270.5px;width:62.30px;height:50.10px;background:#ffff33"></div>
<div class="a" style="left:921.5px;top:270.5px;width:62.70px;height:50.10px;background:#ff0000"></div>
<div class="a" style="left:797.5px;top:320.6px;width:61.70px;height:50.80px;background:#ffff33"></div>
<div class="a" style="left:859.2px;top:320.6px;width:62.30px;height:50.80px;background:#ff0000"></div>
<div class="a" style="left:921.5px;top:320.6px;width:62.70px;height:50.80px;background:#ff0000"></div>
<div class="a" style="left:797.10px;top:169.4px;width:0.8px;height:201.8px;background:#ddd6d6"></div>
<div class="a" style="left:858.80px;top:169.4px;width:0.8px;height:201.8px;background:#ddd6d6"></div>
<div class="a" style="left:921.10px;top:169.4px;width:0.8px;height:201.8px;background:#ddd6d6"></div>
<div class="a" style="left:767.4px;top:219.60px;width:216.5px;height:0.8px;background:#ddd6d6"></div>
<div class="a" style="left:767.4px;top:270.10px;width:216.5px;height:0.8px;background:#ddd6d6"></div>
<div class="a" style="left:767.4px;top:320.20px;width:216.5px;height:0.8px;background:#ddd6d6"></div>
<div class="a" style="left:767.4px;top:169.4px;width:216.5px;height:201.8px;border-top:0.6px solid #e4e0e0;border-left:0.6px solid #e4e0e0"></div>
<div class="a" style="left:767.4px;top:169.4px;width:216.5px;height:51px;border-right:0.6px solid #e4e0e0"></div>
<div class="a" style="left:767.4px;top:169.4px;width:30.5px;height:201.8px;border-bottom:0.6px solid #e4e0e0"></div>
<div class="t" style="left:819.15px;top:190.4px;font-size:6.85px;font-weight:bold;color:#333">Baixa</div>
<div class="t" style="left:880.25px;top:190.4px;font-size:6.85px;font-weight:bold;color:#333">Média</div>
<div class="t" style="left:946.20px;top:190.4px;font-size:6.85px;font-weight:bold;color:#333">Alta</div>
<div class="t" style="left:771.3px;top:240.90px;font-size:7.5px;color:#333">Baixo</div>
<div class="t" style="left:771.3px;top:291.30px;font-size:7.5px;color:#333">Médio</div>
<div class="t" style="left:771.3px;top:342.10px;font-size:7.5px;color:#333">Alto</div>
<div class="t" style="left:736.3px;top:265.6px;width:40px;text-align:center;font-size:7.9px;font-weight:bold;color:#333;transform:rotate(-90deg)">Impacto</div>
<div class="a" style="left:885px;top:290.5px;width:10.3px;height:9.5px;background:#111"></div>
<div class="t" style="left:887.6px;top:290.3px;font-size:7.4px;font-weight:bold;color:#fff">R</div>
<div class="a" style="left:551.3px;top:382.6px;width:444.6px;height:180.4px;border:0.9px solid #d2d2d2"></div>
<div class="a" style="left:559.8px;top:379px;width:28.6px;height:6px;background:#fff"></div>
<div class="t" style="left:560.8px;top:377.8px;font-size:6.8px;color:#333">Detalhes</div>
<div class="a" style="left:559.6px;top:412px;width:425px;height:0.8px;background:#e2e2e2"></div>
<div class="a" style="left:559.6px;top:386.6px;width:30px;height:23.2px;background:#fff;border:0.7px solid #e4e4e4;border-bottom:none;border-top:1.3px solid #4a90d9;border-radius:3px 3px 0 0"></div>
<div class="t" style="left:566.4px;top:394.8px;font-size:8px;color:#4a90d9;transform:scaleY(1.12)">Real</div>
<div class="a" style="left:590.8px;top:386.6px;width:57.60px;height:22.7px;background:#f1f1f1;border:0.8px solid #e2e2e2;border-bottom:none;border-radius:2.5px 2.5px 0 0"></div>
<div class="t" style="left:597.3px;top:394.6px;font-size:8.55px;color:#666;transform:scaleY(1.12)">Justificativa</div>
<div class="a" style="left:649.6px;top:386.6px;width:36.70px;height:22.7px;background:#f1f1f1;border:0.8px solid #e2e2e2;border-bottom:none;border-radius:2.5px 2.5px 0 0"></div>
<div class="t" style="left:656.2px;top:394.6px;font-size:8.3px;color:#666;transform:scaleY(1.12)">Anexo</div>
<div class="a" style="left:687.1px;top:386.6px;width:55.80px;height:22.7px;background:#f1f1f1;border:0.8px solid #e2e2e2;border-bottom:none;border-radius:2.5px 2.5px 0 0"></div>
<div class="t" style="left:693.9px;top:394.6px;font-size:8.25px;color:#666;transform:scaleY(1.12)">Documento</div>
<div class="a" style="left:559.4px;top:417.5px;width:425.4px;height:140.7px;background:#fff;border:0.8px solid #dcdcdc;border-radius:1.5px"></div>
<div class="a" style="left:559.8px;top:417.9px;width:424.2px;height:15.7px;background:#e6e6e6"></div>
<div class="a" style="left:559.8px;top:459.3px;width:424.2px;height:25px;background:#ececec;border-bottom:0.7px solid #dcdcdc"></div>
<div class="a" style="left:812.5px;top:417.9px;width:0.8px;height:66.4px;background:#e4e4e4"></div>
<div class="t" style="left:563px;top:421.9px;font-size:7.75px;font-weight:bold;color:#444">Critério</div>
<div class="t" style="left:816.6px;top:421.9px;font-size:7.7px;font-weight:bold;color:#444">Resultado</div>
<div class="t" style="left:563px;top:443.2px;font-size:8px;color:#777">Probabilidade</div>
<div class="t" style="left:816.6px;top:443.2px;font-size:7.8px;color:#777">Média</div>
<div class="t" style="left:563px;top:467.1px;font-size:7.6px;color:#777">Impacto</div>
<div class="t" style="left:816.6px;top:467.1px;font-size:7.8px;color:#777">Médio</div>
</body></html>
